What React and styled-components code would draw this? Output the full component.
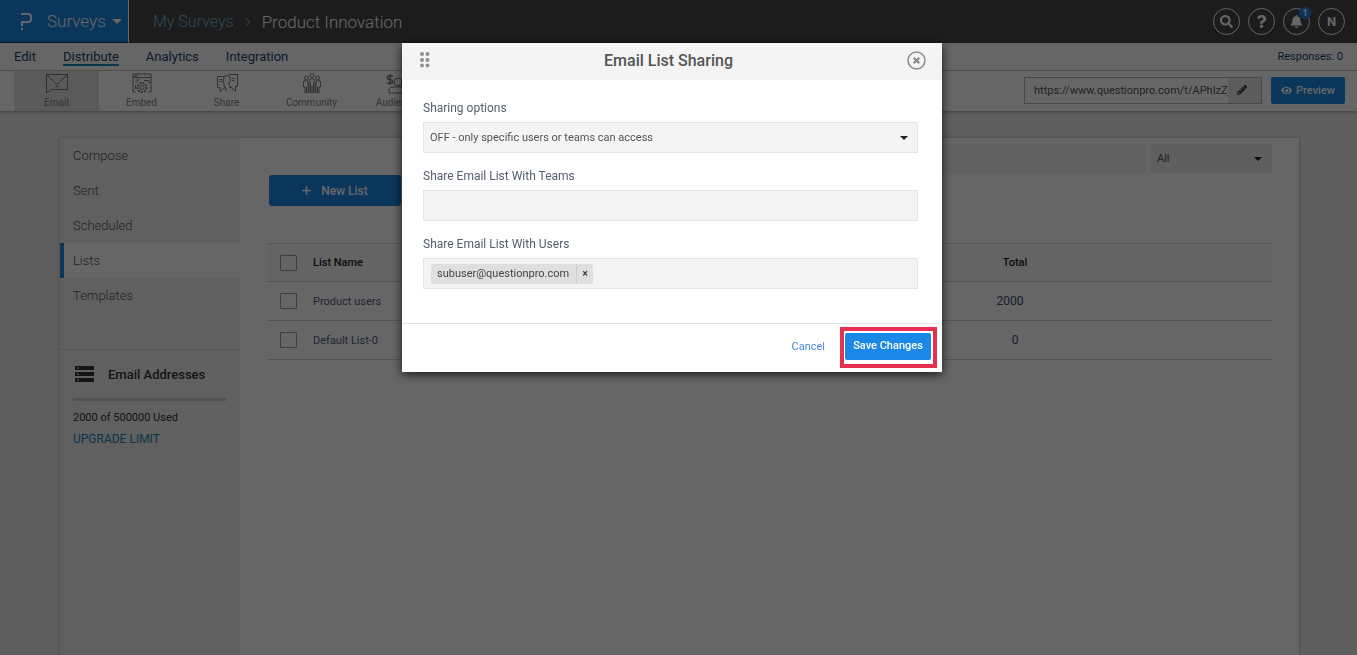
import styled, { createGlobalStyle } from "styled-components"
import { FaSearch, FaQuestion, FaBell, FaPencilAlt, FaEye } from "react-icons/fa"

const GlobalStyle = createGlobalStyle`
    * {
        box-sizing: border-box;
    }
    body {
        margin: 0;
        background-color: #eeeeee;
        color: #545e6b;
        font-family: Roboto, "Liberation Sans", sans-serif;
        font-size: 12px;
        overflow: hidden;
    }
    button, input, select {
        font-family: inherit;
        margin: 0;
    }
    a {
        text-decoration: none;
    }
`;

const Page = styled.div`
    display: flex;
    flex-direction: column;
    min-height: 100vh;
`;

const TopBar = styled.header`
    display: flex;
    height: 43px;
    background-color: #474747;
    color: white;
    font-size: 17px;
    font-weight: 300;
`;

const Product = styled.button`
    display: flex;
    align-items: center;
    width: 129px;
    padding: 0px 6px 0px 20px;
    border: none;
    border-right: 1px solid white;
    border-bottom: 1px solid #22303d;
    background-color: #1b87e6;
    color: white;
    font-size: 17px;
    font-weight: 300;
`;

const ProductName = styled.span`
    flex: 1;
    margin-left: 14px;
    text-align: left;
`;

const Caret = styled.span`
    border: ${props => props.$size}px solid transparent;
    border-top-color: currentColor;
    border-bottom: none;
`;

const Breadcrumb = styled.nav`
    display: flex;
    flex: 1;
    align-items: center;
    gap: 10px;
    padding-left: 24px;
`;

const CrumbLink = styled.a`
    color: #76b8d8;
    font-size: 16px;
`;

const Actions = styled.div`
    display: flex;
    align-items: center;
    gap: 8px;
    padding-right: 12px;
`;

const RoundButton = styled.button`
    position: relative;
    display: flex;
    align-items: center;
    justify-content: center;
    width: 27px;
    height: 27px;
    padding: 0;
    border: 1px solid white;
    border-radius: 50%;
    background: none;
    color: white;
    font-size: 13px;
    font-weight: 700;
`;

const Badge = styled.span`
    position: absolute;
    top: -2px;
    right: -2px;
    width: 12px;
    height: 12px;
    border-radius: 50%;
    background-color: #1b87e6;
    font-size: 9px;
    line-height: 12px;
`;

const MenuBar = styled.nav`
    display: flex;
    align-items: center;
    gap: 27px;
    height: 28px;
    padding: 2px 14px 0px;
    border-bottom: 1px solid #cccccc;
    background-color: white;
`;

const MenuLink = styled.a`
    color: #1b3f70;
    font-size: 13px;
    line-height: 15px;
    border-bottom: 2px solid ${props => props.$active ? "#1b87b6" : "transparent"};
`;

const Responses = styled.a`
    margin-left: auto;
    padding-bottom: 2px;
    color: #1b3f70;
    font-size: 11px;
`;

const ToolBar = styled.div`
    display: flex;
    align-items: center;
    height: 40px;
    padding: 0px 12px 1px 14px;
    background-color: white;
    box-shadow: 0 1px 3px #999999;
`;

const Tool = styled.a`
    display: flex;
    flex: 0 0 auto;
    flex-direction: column;
    align-items: center;
    align-self: flex-start;
    width: 85px;
    height: 40px;
    padding-top: 2px;
    background-color: ${props => props.$active ? "#e2e2e2" : "white"};
    color: #858585;
    font-size: 10px;
    line-height: 12px;
    gap: 2px;
`;

const ShareUrl = styled.div`
    display: flex;
    width: 238px;
    height: 27px;
    margin-left: auto;
    margin-right: 9px;
    border: 1px solid #b5b5b5;
`;

const UrlInput = styled.input`
    flex: 1;
    min-width: 0;
    padding: 0px 0px 0px 9px;
    border: none;
    background-color: white;
    color: #545454;
    font-size: 11px;
`;

const EditUrl = styled.button`
    width: 33px;
    padding: 0;
    padding-right: 6px;
    border: none;
    background-color: #e9e9e9;
    color: #333333;
    font-size: 10px;
`;

const Preview = styled.button`
    display: flex;
    align-items: center;
    justify-content: center;
    gap: 4px;
    width: 74px;
    height: 27px;
    padding: 0;
    border: none;
    border-radius: 2px;
    background-color: #1b87e6;
    color: white;
    font-size: 11px;
    font-weight: 500;
`;

const Card = styled.main`
    display: flex;
    flex: 1;
    margin: 27px 58px 0px 60px;
    background-color: white;
    box-shadow: 0 0 4px #aaaaaa;
`;

const SideBar = styled.aside`
    width: 180px;
    background-color: #f0f0f0;
`;

const SideNav = styled.nav`
    height: 212px;
    border-bottom: 1px solid #d8d8d8;
`;

const SideLink = styled.a`
    display: block;
    height: 35px;
    padding-left: 9px;
    border-left: 4px solid ${props => props.$active ? "#1b87e6" : "transparent"};
    background-color: ${props => props.$active ? "white" : "transparent"};
    color: #545454;
    font-size: 13px;
    font-weight: 300;
    line-height: 35px;
`;

const Usage = styled.section`
    padding: 15px 14px 0px 13px;
`;

const UsageTitle = styled.h2`
    display: flex;
    align-items: center;
    gap: 14px;
    height: 18px;
    margin: 0px 0px 15px 2px;
    color: #333333;
    font-size: 13px;
    font-weight: 500;
`;

const UsageBar = styled.div`
    height: 3px;
    margin-bottom: 9px;
    background-color: #cccccc;
`;

const UsageText = styled.p`
    margin: 0;
    color: #333333;
    font-size: 11px;
    line-height: 16px;
`;

const Upgrade = styled.a`
    display: block;
    margin-top: 5px;
    color: #1b7fb5;
    font-size: 12px;
    line-height: 16px;
`;

const Content = styled.section`
    flex: 1;
    padding: 6px 27px 0px 27px;
`;

const Filters = styled.div`
    display: flex;
    justify-content: flex-end;
    gap: 5px;
`;

const Search = styled.input`
    width: 360px;
    height: 29px;
    border: none;
    background-color: #f3f3f3;
`;

const SelectBox = styled.div`
    display: flex;
    align-items: center;
    position: relative;
    width: ${props => props.$width};
    color: #222222;
`;

const SelectCaret = styled(Caret)`
    position: absolute;
    right: 10px;
    pointer-events: none;
`;

const Select = styled.select`
    appearance: none;
    width: 100%;
    height: 29px;
    padding: 0px 6px;
    border: none;
    border-radius: 2px;
    background-color: #eeeeee;
    color: #545454;
    font-size: 11px;
`;

const NewList = styled.button`
    display: flex;
    align-items: center;
    justify-content: center;
    gap: 10px;
    width: 132px;
    height: 31px;
    margin: 2px 0px 37px 2px;
    border: none;
    border-radius: 3px;
    background-color: #1b87e6;
    color: white;
    font-size: 12px;
    font-weight: 500;
`;

const ListTable = styled.table`
    width: 100%;
    table-layout: fixed;
    border-collapse: collapse;
    border-top: 1px solid #dddddd;
`;

const Row = styled.tr`
    height: ${props => props.$head ? 38 : 39}px;
    border-bottom: 1px solid #d5d5d5;
    background-color: ${props => props.$head ? "#fafafa" : "white"};
`;

const Cell = styled.td`
    width: ${props => props.$width};
    padding: 0px 0px 0px ${props => props.$indent || 0}px;
    color: #545e7b;
    font-size: 11px;
    text-align: ${props => props.$center ? "center" : "left"};
`;

const HeadCell = styled(Cell)`
    color: #222222;
    font-weight: 500;
`;

const ListLink = styled.a`
    color: #545e7b;
`;

const Count = styled.span`
    padding-right: ${props => props.$linked ? 10 : 0}px;
    color: #3c4a6b;
    font-size: 12px;
`;

const CheckBox = styled.input`
    appearance: none;
    display: block;
    width: 17px;
    height: 16px;
    margin: 0;
    border: 1px solid #999999;
    border-radius: 1px;
`;

const Overlay = styled.div`
    position: fixed;
    inset: 0;
    display: flex;
    align-items: flex-start;
    justify-content: center;
    padding: 43px 13px 0px 0px;
    background-color: rgba(0, 0, 0, 0.6);
`;

const Modal = styled.div`
    width: 540px;
    background-color: white;
    box-shadow: 0 2px 10px rgba(0, 0, 0, 0.8);
`;

const ModalHeader = styled.header`
    display: flex;
    align-items: center;
    justify-content: space-between;
    height: 37px;
    padding: 0px 16px 3px 18px;
    background-color: #f4f4f4;
`;

const ModalTitle = styled.h1`
    margin: 0;
    color: #545454;
    font-size: 16px;
    font-weight: 500;
`;

const CloseButton = styled.button`
    display: flex;
    padding: 0;
    border: none;
    background: none;
`;

const ModalBody = styled.form`
    display: flex;
    flex-direction: column;
    gap: 15px;
    padding: 20px 24px 34px 21px;
`;

const Field = styled.div`
    display: flex;
    flex-direction: column;
    gap: 6px;
`;

const Label = styled.label`
    color: #545e6b;
    font-size: 12px;
    line-height: 16px;
`;

const ModalSelect = styled(Select)`
    height: 31px;
    border: 1px solid #e5e5e5;
    border-radius: 0;
    background-color: #f4f4f4;
`;

const TagBox = styled.div`
    display: flex;
    align-items: center;
    height: 31px;
    padding: 0px 7px;
    border: 1px solid #e5e5e5;
    background-color: #f4f4f4;
`;

const TagInput = styled.input`
    flex: 1;
    min-width: 0;
    border: none;
    outline: none;
    background: none;
`;

const Tag = styled.span`
    display: flex;
    height: 20px;
    border-radius: 2px;
    background-color: #dfdfdf;
    color: #444444;
    font-size: 11px;
    line-height: 20px;
    padding-left: 6px;
`;

const RemoveTag = styled.button`
    width: 17px;
    margin-left: 7px;
    padding: 0;
    border: none;
    border-left: 1px solid #cccccc;
    background: none;
    color: #333333;
    font-size: 10px;
    font-weight: 700;
`;

const ModalFooter = styled.footer`
    display: flex;
    align-items: center;
    justify-content: flex-end;
    gap: 15px;
    padding: 3px 5px 4px;
    border-top: 1px solid #e5e5e5;
`;

const Cancel = styled.button`
    padding: 0px 0px 2px;
    border: none;
    background: none;
    color: #4a86dd;
    font-size: 11px;
`;

const Highlight = styled.div`
    padding: 2px 2px 4px 1px;
    border: 4px solid #e5304f;
`;

const Save = styled.button`
    width: 86px;
    height: 27px;
    padding: 0px 0px 2px;
    border: none;
    border-radius: 2px;
    background-color: #1b87e6;
    color: white;
    font-size: 11px;
    font-weight: 500;
`;

const LogoIcon = () => (
    <svg width="13" height="19" viewBox="0 0 13 19" fill="none" stroke="white" strokeWidth="2">
        <path d="M1 2H8Q11 2 11 5V7Q11 10 8 10H2V14.500" />
        <path d="M1 17H3" />
    </svg>
)

const icons = {
    email: <path d="M.5 1.500H21.500V16.500H6L.5 20ZM.5 1.500L11 11.500L21.500 1.500M9.500 13.500H12.500" />,
    embed: (
        <>
            <path d="M5 19H2V1H20V19H17M2 4.500H20M3 3H7M4.500 7H9M4.500 9H7M13 7.500H18V11M4.500 16V12" />
            <circle cx="11" cy="14.500" r="4.500" strokeDasharray="2 1" strokeWidth="2" />
            <circle cx="11" cy="14.500" r="2" />
        </>
    ),
    share: (
        <>
            <path d="M8 3.500H1.500V14.500H4V18.500L8 15H10M13 1.500H21.500V13.500H19.500V18L15 14.500H13" />
            <path d="M10 18V15L8 13V10.500L7 9L8 4L11 2L14 4L14.500 8L13 10V12L15.500 14.500M3.500 6.500H6M3.500 8.500H6M16 5.500H18.500M16 7.500H18.500" />
        </>
    ),
    community: (
        <>
            <circle cx="11" cy="2.500" r="2" />
            <circle cx="5.500" cy="5" r="2" />
            <circle cx="16.500" cy="5" r="2" />
            <path d="M8 20V8Q8 6 11 6T14 8V20M11 13V20M2.500 8.500Q5 6.500 7 8.500V20M2.500 8.500V14H4V20M19.500 8.500Q17 6.500 15 8.500V20M19.500 8.500V14H18V20M5.500 14V20M16.500 14V20M9.500 9V20M12.500 9V20" />
        </>
    ),
    audience: (
        <>
            <path d="M7 3H3.500Q1 3 1.500 5T4 6.500T6.500 8.500T4 10H1M4 1V12" strokeWidth="1.500" />
            <circle cx="12" cy="9" r="4" />
            <path d="M3 20V17Q3 14 8 14H16Q20 14 20 17V20Z" />
        </>
    ),
}

const ToolIcon = ({ name }) => (
    <svg width="22" height="22" viewBox="0 0 22 22" fill="none" stroke="#74787e" strokeWidth="1">
        {icons[name]}
    </svg>
)

const ServerIcon = () => (
    <svg width="19" height="16" viewBox="0 0 19 16" fill="#333333">
        <path d="M0 0H19V4H0ZM0 6H19V10H0ZM0 12H19V16H0Z" />
        <path d="M2 1.500H4V2.500H2ZM2 7.500H4V8.500H2ZM2 13.500H4V14.500H2Z" fill="white" />
    </svg>
)

const GripIcon = () => (
    <svg width="10" height="16" viewBox="0 0 10 16" fill="#919191">
        <circle cx="2" cy="2" r="2" />
        <circle cx="7.500" cy="2" r="2" />
        <circle cx="2" cy="8" r="2" />
        <circle cx="7.500" cy="8" r="2" />
        <circle cx="2" cy="13.500" r="2" />
        <circle cx="7.500" cy="13.500" r="2" />
    </svg>
)

const CloseIcon = () => (
    <svg width="19" height="19" viewBox="0 0 19 19" fill="none" stroke="#8a8a8a">
        <circle cx="9.500" cy="9.500" r="8.500" strokeWidth="1.500" />
        <path d="M6.700 6.700L12.300 12.300M12.300 6.700L6.700 12.300" strokeWidth="2.200" />
    </svg>
)

const tools = [
    { icon: "email", text: "Email" },
    { icon: "embed", text: "Embed" },
    { icon: "share", text: "Share" },
    { icon: "community", text: "Community" },
    { icon: "audience", text: "Audience" },
]

const menu = ["Edit", "Distribute", "Analytics", "Integration"]

const sections = ["Compose", "Sent", "Scheduled", "Lists", "Templates"]

const lists = [
    { name: "Product users", total: 2000 },
    { name: "Default List-0", total: 0 },
]

const App = () => {
  return (
    <>
        <GlobalStyle/>
        <Page>
            <TopBar>
                <Product>
                    <LogoIcon/>
                    <ProductName>Surveys</ProductName>
                    <Caret $size={5}/>
                </Product>
                <Breadcrumb>
                    <CrumbLink href="#">My Surveys</CrumbLink>
                    <svg width="8" height="10" viewBox="0 0 8 10" fill="none" stroke="#aaaaaa"><path d="M1.500 1L6 5L1.500 9"/></svg>
                    <span>Product Innovation</span>
                </Breadcrumb>
                <Actions>
                    <RoundButton aria-label="Search"><FaSearch/></RoundButton>
                    <RoundButton aria-label="Help"><FaQuestion/></RoundButton>
                    <RoundButton aria-label="Notifications"><FaBell/><Badge>1</Badge></RoundButton>
                    <RoundButton>N</RoundButton>
                </Actions>
            </TopBar>
            <MenuBar>
                {menu.map(item => (
                    <MenuLink href="#" key={item} $active={item === "Distribute"}>{item}</MenuLink>
                ))}
                <Responses href="#">Responses: 0</Responses>
            </MenuBar>
            <ToolBar>
                {tools.map((tool, i) => (
                    <Tool href="#" key={tool.icon} $active={i === 0}>
                        <ToolIcon name={tool.icon}/>
                        {tool.text}
                    </Tool>
                ))}
                <ShareUrl>
                    <UrlInput aria-label="Survey URL" defaultValue="https://www.questionpro.com/t/APhIzZj"/>
                    <EditUrl aria-label="Edit URL"><FaPencilAlt/></EditUrl>
                </ShareUrl>
                <Preview><FaEye/>Preview</Preview>
            </ToolBar>
            <Card>
                <SideBar>
                    <SideNav>
                        {sections.map(item => (
                            <SideLink href="#" key={item} $active={item === "Lists"}>{item}</SideLink>
                        ))}
                    </SideNav>
                    <Usage>
                        <UsageTitle><ServerIcon/>Email Addresses</UsageTitle>
                        <UsageBar/>
                        <UsageText>2000 of 500000 Used</UsageText>
                        <Upgrade href="#">UPGRADE LIMIT</Upgrade>
                    </Usage>
                </SideBar>
                <Content>
                    <Filters>
                        <Search aria-label="Search lists"/>
                        <SelectBox $width="121px">
                            <Select aria-label="Filter lists"><option>All</option></Select>
                            <SelectCaret $size={4}/>
                        </SelectBox>
                    </Filters>
                    <NewList>
                        <svg width="9" height="9" viewBox="0 0 9 9" stroke="white" strokeWidth="1.500"><path d="M4.500 0V9M0 4.500H9"/></svg>
                        New List
                    </NewList>
                    <ListTable>
                        <thead>
                            <Row $head>
                                <HeadCell as="th" $width="46px" $indent={13}><CheckBox type="checkbox" aria-label="Select all lists"/></HeadCell>
                                <HeadCell as="th">List Name</HeadCell>
                                <HeadCell as="th" $width="514px" $center>Total</HeadCell>
                            </Row>
                        </thead>
                        <tbody>
                            {lists.map(list => (
                                <Row key={list.name}>
                                    <Cell $indent={13}><CheckBox type="checkbox" aria-label={list.name}/></Cell>
                                    <Cell><ListLink href="#">{list.name}</ListLink></Cell>
                                    <Cell $center><Count $linked={list.total > 0}>{list.total}</Count></Cell>
                                </Row>
                            ))}
                        </tbody>
                    </ListTable>
                </Content>
            </Card>
        </Page>
        <Overlay>
            <Modal role="dialog" aria-labelledby="sharing-title">
                <ModalHeader>
                    <GripIcon/>
                    <ModalTitle id="sharing-title">Email List Sharing</ModalTitle>
                    <CloseButton aria-label="Close"><CloseIcon/></CloseButton>
                </ModalHeader>
                <ModalBody id="sharing">
                    <Field>
                        <Label htmlFor="options">Sharing options</Label>
                        <SelectBox $width="100%">
                            <ModalSelect id="options"><option>OFF - only specific users or teams can access</option></ModalSelect>
                            <SelectCaret $size={4}/>
                        </SelectBox>
                    </Field>
                    <Field>
                        <Label htmlFor="teams">Share Email List With Teams</Label>
                        <TagBox><TagInput id="teams"/></TagBox>
                    </Field>
                    <Field>
                        <Label htmlFor="users">Share Email List With Users</Label>
                        <TagBox>
                            <Tag>
                                subuser@questionpro.com
                                <RemoveTag type="button" aria-label="Remove user">×</RemoveTag>
                            </Tag>
                            <TagInput id="users"/>
                        </TagBox>
                    </Field>
                </ModalBody>
                <ModalFooter>
                    <Cancel>Cancel</Cancel>
                    <Highlight>
                        <Save form="sharing">Save Changes</Save>
                    </Highlight>
                </ModalFooter>
            </Modal>
        </Overlay>
    </>
  )
}
export default App
